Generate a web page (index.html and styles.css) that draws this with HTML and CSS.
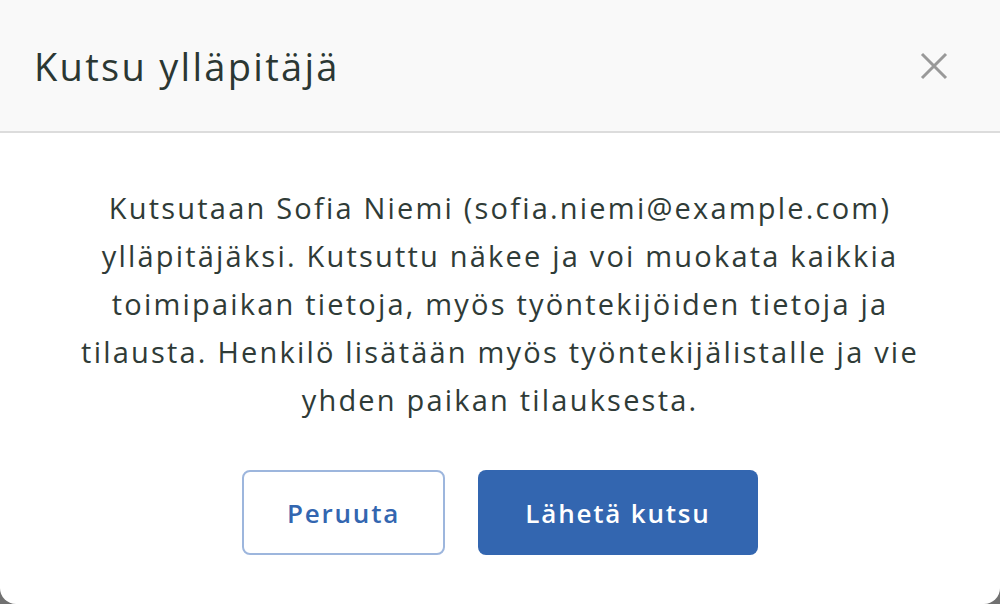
FILE: index.html
```html
<!DOCTYPE html>
<html lang="fi">

<head>
	<meta charset="UTF-8">
	<meta name="viewport" content="width=device-width, initial-scale=1.0">
	<title>Kutsu ylläpitäjä</title>
	<link rel="stylesheet" href="styles.css">
</head>

<body>

	<div class="dialog">
		<div class="dialog-header">
			<h1 class="dialog-title">Kutsu ylläpitäjä</h1>
			<button class="close-btn" aria-label="Sulje">
				<svg width="30" height="30" viewBox="0 0 30 30">
					<path d="M3 3 L27 27 M27 3 L3 27" stroke="#999" stroke-width="3" fill="none" />
				</svg>
			</button>
		</div>
		<div class="dialog-body">
			<p class="dialog-text">Kutsutaan Sofia Niemi (sofia.niemi@example.com) ylläpitäjäksi. Kutsuttu näkee ja voi muokata kaikkia toimipaikan tietoja, myös työntekijöiden tietoja ja tilausta. Henkilö lisätään myös työntekijälistalle ja vie yhden paikan tilauksesta.</p>
			<div class="dialog-actions">
				<button class="btn btn-secondary">Peruuta</button>
				<button class="btn btn-primary">Lähetä kutsu</button>
			</div>
		</div>
	</div>

</body>

</html>
```

FILE: styles.css
```css
* {
	box-sizing: border-box;
}

body {
	margin: 0;
	background-color: #717171;
	font-family: "Open Sans", "Noto Sans", sans-serif;
	color: #2f3b37;
}

.dialog {
	width: 1000px;
	height: 604px;
	background-color: #fff;
	border-radius: 0 0 16px 16px;
	overflow: hidden;
}

.dialog-header {
	height: 133px;
	display: flex;
	align-items: center;
	justify-content: space-between;
	padding: 0 51px 0 34px;
	background-color: #f9f9f9;
	border-bottom: 2px solid #dcdcdc;
}

.dialog-title {
	margin: 0;
	font-size: 38px;
	font-weight: 500;
	letter-spacing: 2.3px;
	color: #2b3733;
}

.close-btn {
	border: none;
	background: none;
	padding: 0;
	display: flex;
	cursor: pointer;
}

.dialog-body {
	padding: 51px 70px 0;
	display: flex;
	flex-direction: column;
	align-items: center;
}

.dialog-text {
	margin: 0;
	text-align: center;
	font-size: 29px;
	line-height: 48px;
	letter-spacing: 2.2px;
}

.dialog-actions {
	display: flex;
	gap: 33px;
	margin-top: 46px;
}

.btn {
	height: 85px;
	border-radius: 8px;
	font-family: inherit;
	font-size: 26px;
	font-weight: 600;
	letter-spacing: 1.8px;
	cursor: pointer;
}

.btn-secondary {
	width: 203px;
	background-color: #fff;
	border: 2px solid #9db6dd;
	color: #3366b0;
}

.btn-primary {
	width: 280px;
	background-color: #3366b0;
	border: none;
	color: #fff;
}
```
